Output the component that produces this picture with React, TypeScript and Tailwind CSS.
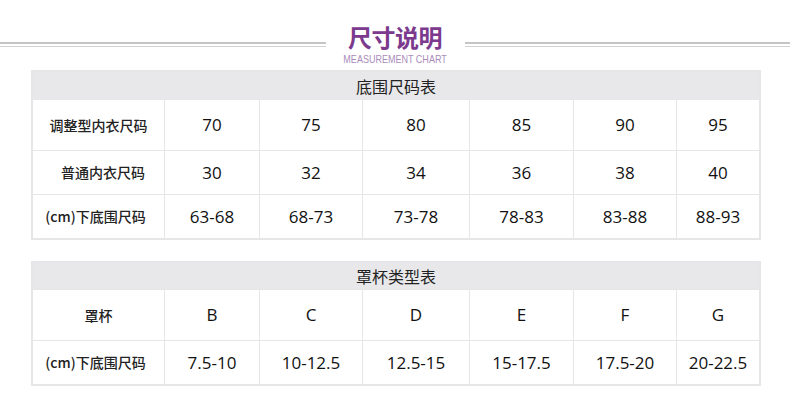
import React from "react";

const cols = "grid grid-cols-[131px_95px_103px_107px_104px_103px_83px]";
const cjk = { fontFamily: '"Noto Sans CJK SC", sans-serif' };

type Row = { label: string; cells: string[]; h: string; shift?: string };

const bandRows: Row[] = [
  { label: "调整型内衣尺码", cells: ["70", "75", "80", "85", "90", "95"], h: "h-[51px]" },
  { label: "普通内衣尺码", cells: ["30", "32", "34", "36", "38", "40"], h: "h-[44px]", shift: "pl-[9px]" },
  { label: "(cm)下底围尺码", cells: ["63-68", "68-73", "73-78", "78-83", "83-88", "88-93"], h: "h-[44px]", shift: "pr-[6px]" },
];

const cupRows: Row[] = [
  { label: "罩杯", cells: ["B", "C", "D", "E", "F", "G"], h: "h-[51px]" },
  { label: "(cm)下底围尺码", cells: ["7.5-10", "10-12.5", "12.5-15", "15-17.5", "17.5-20", "20-22.5"], h: "h-[44px]", shift: "pr-[6px]" },
];

function SizeTable({ title, rows, headH }: { title: string; rows: Row[]; headH: string }) {
  return (
    <div className="ml-[31px] w-[730px] border-2 border-[#e6e6e8] bg-white">
      <div className={`${headH} flex items-center justify-center bg-[#e8e8ea] text-[16px] text-[#222]`} style={cjk}>
        {title}
      </div>
      {rows.map((row) => (
        <div key={row.label} className={`${cols} ${row.h} border-t border-[#e6e6e6]`}>
          <div
            className={`flex items-center justify-center text-[14px] font-medium text-[#222] ${row.shift ?? ""}`}
            style={cjk}
          >
            {row.label}
          </div>
          {row.cells.map((c, i) => (
            <div
              key={i}
              className="flex items-center justify-center border-l border-[#e6e6e6] font-['Open_Sans',sans-serif] text-[17px] text-[#111]"
            >
              {c}
            </div>
          ))}
        </div>
      ))}
    </div>
  );
}

export default function App() {
  return (
    <div className="w-[790px] h-[401px] bg-white overflow-hidden">
      {/* heading with double rules */}
      <div className="flex items-start pt-[25px] h-[70px]">
        <div className="flex-1 pt-[17px]">
          <div className="h-[2px] bg-[#c4c4c4]" />
          <div className="h-px bg-[#d2d2d2] mt-[2px]" />
        </div>
        <div className="w-[139px] flex flex-col items-center">
          <div className="text-[24px] leading-[24px] font-bold text-[#7b3a8d] tracking-[-0.5px]" style={cjk}>
            尺寸说明
          </div>
          <div className="mt-[5px] text-[11px] leading-[10px] text-[#a98cbb] whitespace-nowrap scale-x-[0.82] font-['Liberation_Sans',sans-serif]">
            MEASUREMENT CHART
          </div>
        </div>
        <div className="flex-1 pt-[17px]">
          <div className="h-[2px] bg-[#c4c4c4]" />
          <div className="h-px bg-[#d2d2d2] mt-[2px]" />
        </div>
      </div>

      <SizeTable title="底围尺码表" rows={bandRows} headH="h-[27px]" />
      <div className="h-[21px]" />
      <SizeTable title="罩杯类型表" rows={cupRows} headH="h-[26px]" />
    </div>
  );
}
